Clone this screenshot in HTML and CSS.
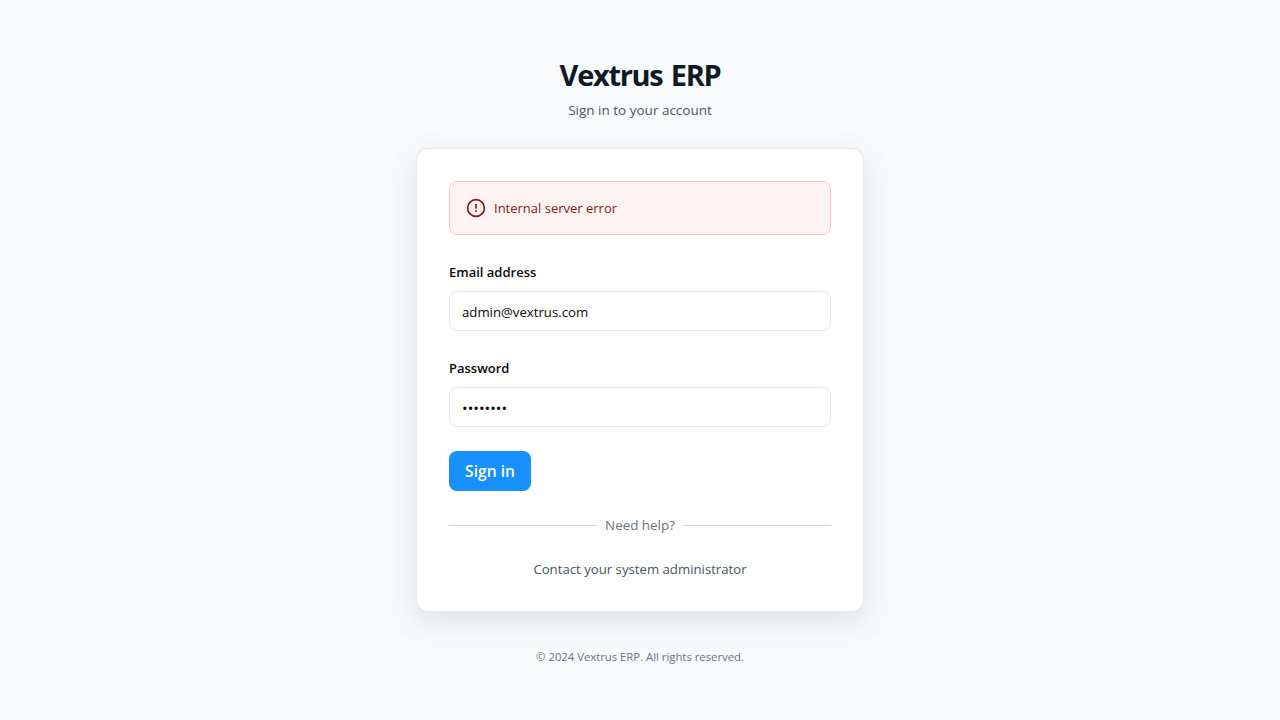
FILE: index.html
```html
<!DOCTYPE html>
<html lang="en">
<head>
<meta charset="utf-8">
<title>Vextrus ERP</title>
<link rel="stylesheet" href="styles.css">
</head>
<body>
<main class="page">
  <header class="header">
    <h1 class="title">Vextrus ERP</h1>
    <p class="subtitle">Sign in to your account</p>
  </header>
  <section class="card">
    <div class="alert">
      <svg class="alert-icon" viewBox="0 0 20 20" fill="none" stroke="currentColor" stroke-width="1.7"><circle cx="10" cy="10" r="8.4"/><path d="M10 6v4.8M10 12.2v1.8"/></svg>
      <span class="alert-text">Internal server error</span>
    </div>
    <form class="form">
      <div class="field">
        <label class="label" for="email">Email address</label>
        <input class="input input-email" id="email" type="email" value="admin@vextrus.com">
      </div>
      <div class="field">
        <label class="label" for="password">Password</label>
        <input class="input input-password" id="password" type="password" value="password">
      </div>
      <button class="button" type="button">Sign in</button>
    </form>
    <div class="divider"><span class="divider-text">Need help?</span></div>
    <p class="contact">Contact your system administrator</p>
  </section>
  <footer class="footer">© 2024 Vextrus ERP. All rights reserved.</footer>
</main>
</body>
</html>
```
FILE: styles.css
```css
* { box-sizing: border-box; margin: 0; }
body {
  font-family: "Open Sans", "Noto Sans", sans-serif;
  font-size: 13px;
  line-height: 20px;
  background: #f9fafc;
  color: #111827;
}
.page {
  width: 448px;
  margin: 0 auto;
  padding-top: 57px;
}
.header { text-align: center; margin-bottom: 28px; }
.title { font-size: 29px; line-height: 36px; font-weight: 700; letter-spacing: -1.3px; word-spacing: 2px; margin-bottom: 7px; }
.subtitle { color: #4b5563; font-size: 13.5px; }
.card {
  background: #fff;
  border: 1px solid #e5e7eb;
  border-radius: 12px;
  padding: 32px;
  height: 464px;
  box-shadow: 0 10px 30px rgba(0,0,0,.1);
}
.alert {
  display: flex;
  align-items: center;
  gap: 8px;
  height: 54px;
  padding: 0 16px;
  border: 1px solid #fecaca;
  border-radius: 8px;
  background: #fef2f2;
  color: #7f1d1d;
  margin-bottom: 27px;
}
.alert-icon { width: 20px; height: 20px; }
.form { display: flex; flex-direction: column; align-items: flex-start; }
.field { width: 100%; display: flex; flex-direction: column; gap: 9px; margin-bottom: 27px; }
.field:last-of-type { margin-bottom: 24px; }
.label { font-weight: 600; color: #0a0a0a; }
.input {
  height: 40px;
  width: 100%;
  border: 1px solid #e5e7eb;
  border-radius: 8px;
  padding: 2px 12px 0;
  font: inherit;
  color: #0a0a0a;
}
.input-email { font-size: 13.2px; }
.input-password { font-size: 15px; }
.button {
  width: 82px;
  height: 40px;
  border: 0;
  border-radius: 8px;
  background: #1890ff;
  color: #fff;
  font: 600 15.6px "Open Sans", "Noto Sans", sans-serif;
}
.divider { display: flex; align-items: center; gap: 8px; margin-top: 24px; color: #6b7280; }
.divider::before, .divider::after { content: ""; flex: 1; height: 1px; background: #d1d5db; }
.divider-text { font-size: 13.4px; }
.contact { margin-top: 24px; text-align: center; font-size: 13.2px; color: #4b5563; }
.footer { margin-top: 35px; text-align: center; font-size: 11.3px; color: #6b7280; }
```
